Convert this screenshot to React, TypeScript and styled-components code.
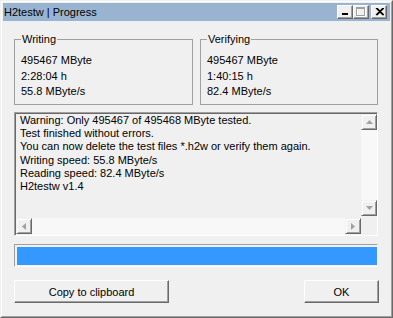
import styled, {createGlobalStyle} from "styled-components";

const GlobalStyle = createGlobalStyle`
  body {
    margin: 0;
    background: #f0f0f0;
    font-family: Tahoma, "Liberation Sans", Arial, sans-serif;
    font-size: 11px;
    color: #000;
  }
`

const Window = styled.div`
  box-sizing: border-box;
  width: 393px;
  height: 318px;
  display: flex;
  flex-direction: column;
  background: #f0f0f0;
  border: 1px solid;
  border-color: #f0f0f0 #696969 #696969 #f0f0f0;
`

const Frame = styled.div`
  flex: 1;
  display: flex;
  flex-direction: column;
  padding: 1px;
  border: 1px solid;
  border-color: #fff #a0a0a0 #a0a0a0 #fff;
`

const TitleBar = styled.div`
  height: 18px;
  display: flex;
  align-items: center;
  justify-content: space-between;
  padding: 0 3px 0 1px;
  background: #99b4d1;
`

const TitleText = styled.span`
  line-height: 18px;
  white-space: nowrap;
`

const Caption = styled.div`
  display: flex;
  gap: 0;
`

const CaptionButton = styled.div<{ $gap?: boolean }>`
  box-sizing: border-box;
  width: 16px;
  height: 14px;
  margin-left: ${(p) => (p.$gap ? "2px" : "0")};
  display: flex;
  align-items: center;
  justify-content: center;
  background: #f0f0f0;
  border: 1px solid;
  border-color: #fff #696969 #696969 #fff;
  box-shadow: inset -1px -1px #a0a0a0;
`

const Body = styled.div`
  flex: 1;
  display: flex;
  flex-direction: column;
  padding: 12px 12px 0 11px;
`

const GroupRow = styled.div`
  display: grid;
  grid-template-columns: 179px 178px;
  column-gap: 7px;
`

const Group = styled.fieldset`
  box-sizing: border-box;
  height: 72px;
  margin: 0;
  padding: 7px 6px 0 6px;
  border: 1px solid #a0a0a0;
  min-width: 0;
`

const Legend = styled.legend`
  padding: 0 1px;
  line-height: 13px;
`

const GroupLine = styled.div`
  line-height: 15.5px;
  white-space: nowrap;
`

const TextBox = styled.div`
  box-sizing: border-box;
  height: 124px;
  margin-top: 7px;
  display: grid;
  grid-template-columns: 1fr 16px;
  grid-template-rows: 1fr 17px;
  border: 1px solid;
  border-color: #a0a0a0 #fff #fff #a0a0a0;
  box-shadow: inset 1px 1px #696969;
  padding: 1px 0 0 1px;
`

const LogText = styled.div`
  padding: 0 0 0 4px;
  line-height: 13.2px;
  white-space: pre;
  overflow: hidden;
`

const VScroll = styled.div`
  display: flex;
  flex-direction: column;
  padding-bottom: 2px;
`

const HScroll = styled.div`
  display: flex;
  grid-column: 1;
`

const Track = styled.div`
  flex: 1;
  background: #f8f8f8;
`

const Corner = styled.div`
  background: #f0f0f0;
`

const ScrollButton = styled.div`
  box-sizing: border-box;
  width: 16px;
  height: 16px;
  flex-shrink: 0;
  display: flex;
  align-items: center;
  justify-content: center;
  background: #f0f0f0;
  border: 1px solid;
  border-color: #f0f0f0 #696969 #696969 #f0f0f0;
  box-shadow: inset 1px 1px #fff, inset -1px -1px #a0a0a0;
`

const Progress = styled.div`
  box-sizing: border-box;
  height: 23px;
  margin-top: 8px;
  padding: 2px 0 1px 2px;
  border: 1px solid;
  border-color: #a0a0a0 #fff #fff #a0a0a0;
`

const ProgressFill = styled.div`
  height: 100%;
  background: #3399ff;
`

const ButtonRow = styled.div`
  display: flex;
  justify-content: space-between;
  margin-top: 13px;
  margin-right: -1px;
`

const PushButton = styled.button<{ $width: number }>`
  box-sizing: border-box;
  width: ${(p) => p.$width}px;
  height: 23px;
  padding: 0;
  font: inherit;
  color: #000;
  background: #f0f0f0;
  border: 1px solid;
  border-color: #fff #696969 #696969 #fff;
  box-shadow: inset -1px -1px #a0a0a0;
  border-radius: 0;
`

const Arrow = ({dir}: { dir: "up" | "down" | "left" | "right" }) => {
    const pts = {
        up: "0,4 7,4 3.5,0",
        down: "0,0 7,0 3.5,4",
        left: "4,0 4,7 0,3.5",
        right: "0,0 0,7 4,3.5",
    }[dir]
    const vertical = dir === "up" || dir === "down"
    return (
        <svg width={vertical ? 7 : 4} height={vertical ? 4 : 7} viewBox={vertical ? "0 0 7 4" : "0 0 4 7"}>
            <polygon points={pts} fill="#a0a0a0"/>
        </svg>
    )
}

const log = [
    "Warning: Only 495467 of 495468 MByte tested.",
    "Test finished without errors.",
    "You can now delete the test files *.h2w or verify them again.",
    "Writing speed: 55.8 MByte/s",
    "Reading speed: 82.4 MByte/s",
    "H2testw v1.4",
]

const App = () => {
    return (
        <>
            <GlobalStyle/>
            <Window>
                <Frame>
                    <TitleBar>
                        <TitleText>H2testw | Progress</TitleText>
                        <Caption>
                            <CaptionButton>
                                <svg width="8" height="8" viewBox="0 0 8 8">
                                    <rect x="1" y="5" width="6" height="2" fill="#000"/>
                                </svg>
                            </CaptionButton>
                            <CaptionButton>
                                <svg width="10" height="10" viewBox="0 0 10 10">
                                    <rect x="1.5" y="1.5" width="8" height="8" fill="none" stroke="#fff"/>
                                    <rect x="0.5" y="0.5" width="8" height="8" fill="none" stroke="#a0a0a0"/>
                                    <line x1="0.5" y1="1.5" x2="8.5" y2="1.5" stroke="#a0a0a0"/>
                                </svg>
                            </CaptionButton>
                            <CaptionButton $gap>
                                <svg width="9" height="8" viewBox="0 0 9 8">
                                    <path d="M1 0 L8 7 M2 0 L9 7 M8 0 L1 7 M9 0 L2 7" stroke="#000" strokeWidth="1.1"/>
                                </svg>
                            </CaptionButton>
                        </Caption>
                    </TitleBar>
                    <Body>
                        <GroupRow>
                            <Group>
                                <Legend>Writing</Legend>
                                <GroupLine>495467 MByte</GroupLine>
                                <GroupLine>2:28:04 h</GroupLine>
                                <GroupLine>55.8 MByte/s</GroupLine>
                            </Group>
                            <Group>
                                <Legend>Verifying</Legend>
                                <GroupLine>495467 MByte</GroupLine>
                                <GroupLine>1:40:15 h</GroupLine>
                                <GroupLine>82.4 MByte/s</GroupLine>
                            </Group>
                        </GroupRow>
                        <TextBox>
                            <LogText>{log.join("\n")}</LogText>
                            <VScroll>
                                <ScrollButton><Arrow dir="up"/></ScrollButton>
                                <Track/>
                                <ScrollButton><Arrow dir="down"/></ScrollButton>
                            </VScroll>
                            <HScroll>
                                <ScrollButton><Arrow dir="left"/></ScrollButton>
                                <Track/>
                                <ScrollButton><Arrow dir="right"/></ScrollButton>
                            </HScroll>
                            <Corner/>
                        </TextBox>
                        <Progress>
                            <ProgressFill/>
                        </Progress>
                        <ButtonRow>
                            <PushButton $width={155}>Copy to clipboard</PushButton>
                            <PushButton $width={75}>OK</PushButton>
                        </ButtonRow>
                    </Body>
                </Frame>
            </Window>
        </>
    )
}

export default App
